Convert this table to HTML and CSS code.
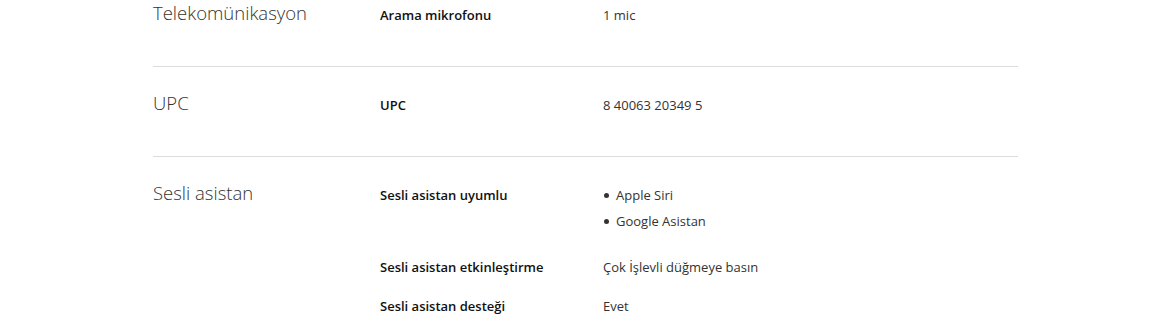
FILE: index.html
```html
<!DOCTYPE html>
<html lang="tr">
<head>
<meta charset="utf-8">
<title>Teknik özellikler</title>
<link rel="stylesheet" href="styles.css">
</head>
<body>
<div class="specs">
  <section class="group">
    <h3 class="group-title">Telekomünikasyon</h3>
    <div class="rows">
      <div class="row">
        <div class="label">Arama mikrofonu</div>
        <div class="value">1 mic</div>
      </div>
    </div>
  </section>
  <section class="group">
    <h3 class="group-title">UPC</h3>
    <div class="rows">
      <div class="row">
        <div class="label">UPC</div>
        <div class="value">8 40063 20349 5</div>
      </div>
    </div>
  </section>
  <section class="group">
    <h3 class="group-title">Sesli asistan</h3>
    <div class="rows">
      <div class="row">
        <div class="label">Sesli asistan uyumlu</div>
        <ul class="value list">
          <li>Apple Siri</li>
          <li>Google Asistan</li>
        </ul>
      </div>
      <div class="row">
        <div class="label">Sesli asistan etkinleştirme</div>
        <div class="value">Çok İşlevli düğmeye basın</div>
      </div>
      <div class="row">
        <div class="label">Sesli asistan desteği</div>
        <div class="value">Evet</div>
      </div>
    </div>
  </section>
</div>
</body>
</html>
```
FILE: styles.css
```css
html, body {
  margin: 0;
  padding: 0;
  background: #fff;
}
body {
  font-family: "Open Sans", "Noto Sans", sans-serif;
  color: #333;
  overflow: hidden;
}
.specs {
  width: 865px;
  margin: -23px 0 0 153px;
}
.group {
  display: grid;
  grid-template-columns: 227px 1fr;
  padding: 28px 0 41px;
  border-bottom: 1px solid #dcdcdc;
}
.group:last-child {
  border-bottom: none;
}
.group-title {
  margin: -3px 0 0;
  font-size: 18.5px;
  font-weight: 300;
  line-height: 22px;
  color: #333;
}
.rows {
  display: flex;
  flex-direction: column;
  gap: 19px;
}
.row {
  display: grid;
  grid-template-columns: 223px 1fr;
}
.label {
  font-size: 13px;
  font-weight: 600;
  line-height: 20px;
  color: #111;
}
.value {
  font-size: 13px;
  line-height: 20px;
  color: #333;
}
.list {
  list-style: none;
  margin: 0 0 7px;
  padding: 0;
  display: flex;
  flex-direction: column;
  gap: 6px;
}
.list li {
  display: flex;
  align-items: center;
}
.list li::before {
  content: "";
  width: 5px;
  height: 5px;
  border-radius: 50%;
  background: #333;
  margin: 0 7px 0 1px;
}
```
